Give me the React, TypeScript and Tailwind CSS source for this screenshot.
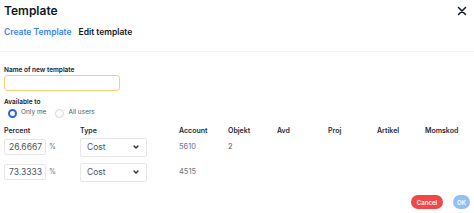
import React from "react";

const Chevron = () => (
  <svg width="6" height="4" viewBox="0 0 6 4" className="text-gray-800">
    <path d="M1 1l2 2L5 1" fill="none" stroke="currentColor" strokeWidth="1.3" strokeLinecap="round" strokeLinejoin="round" />
  </svg>
);

const Row = ({ pct, account, objekt }: { pct: string; account: string; objekt?: string }) => (
  <div className="grid grid-cols-[76px_99px_49px_49px_51px_49px_48px_1fr] items-center h-[20px]">
    <div className="flex items-center">
      <div className="w-[42px] h-[16px] border border-gray-200 rounded-[2px] flex items-center justify-end pr-[3px] text-[8.5px] text-gray-600">
        {pct}
      </div>
      <span className="ml-[3px] text-[7px] text-gray-500">%</span>
    </div>
    <div>
      <div className="w-[67px] h-[19px] border border-gray-200 rounded-[2px] flex items-center justify-between pl-[6px] pr-[7px] text-[8.5px] text-gray-600">
        <span>Cost</span>
        <Chevron />
      </div>
    </div>
    <div className="text-[7.5px] text-gray-500">{account}</div>
    <div className="text-[7.5px] text-gray-600">{objekt ?? ""}</div>
    <div />
    <div />
    <div />
    <div />
  </div>
);

export default function App() {
  return (
    <div
      className="w-[474px] h-[213px] bg-white flex flex-col overflow-hidden"
      style={{ fontFamily: "Inter, 'Noto Sans', sans-serif" }}
    >
      <div className="flex items-start justify-between pl-[4px] pr-[7px] pt-[2px] h-[22px]">
        <div className="text-[12px] font-semibold text-gray-900 leading-[18px]">Template</div>
        <svg width="10" height="10" viewBox="0 0 10 10" className="mt-[4px] text-gray-900">
          <path d="M1.5 1.5l7 7M8.5 1.5l-7 7" stroke="currentColor" strokeWidth="1.5" strokeLinecap="round" />
        </svg>
      </div>
      <div className="flex items-center gap-[7px] pl-[4px] h-[20px] text-[8.5px] font-semibold">
        <span className="text-[#3b82f6]">Create Template</span>
        <span className="text-gray-900">Edit template</span>
      </div>
      <div className="mt-[9px] border-t border-gray-100" />
      <div className="pl-[4px] pt-[14px] flex flex-col">
        <div className="text-[6.5px] font-semibold text-gray-900 leading-[8px]">Name of new template</div>
        <div className="mt-[1px] w-[116px] h-[16px] border border-[#f3cf7a] rounded-[3px]" />
        <div className="mt-[7px] text-[6.5px] font-semibold text-gray-900 leading-[8px]">Available to</div>
        <div className="mt-[1px] flex items-center h-[12px] pl-[4px] text-[6.5px] text-gray-600">
          <span className="w-[9px] h-[9px] rounded-full border-[2.5px] border-[#2563eb] bg-white" />
          <span className="ml-[4px]">Only me</span>
          <span className="ml-[9px] w-[9px] h-[9px] rounded-full border border-gray-300 bg-white" />
          <span className="ml-[4px]">All users</span>
        </div>
        <div className="mt-[7px] grid grid-cols-[76px_99px_49px_49px_51px_49px_48px_1fr] items-center h-[10px] text-[7px] font-semibold text-gray-800">
          <div>Percent</div>
          <div>Type</div>
          <div>Account</div>
          <div>Objekt</div>
          <div>Avd</div>
          <div>Proj</div>
          <div>Artikel</div>
          <div>Momskod</div>
        </div>
        <div className="mt-[1px] flex flex-col gap-[5px]">
          <Row pct="26.6667" account="5610" objekt="2" />
          <Row pct="73.3333" account="4515" />
        </div>
      </div>
      <div className="mt-auto mb-[4px] pr-[4px] flex justify-end gap-[10px]">
        <button className="h-[14px] px-[6px] rounded-full bg-[#f04848] text-white text-[6px] font-semibold">Cancel</button>
        <button className="h-[14px] w-[17px] rounded-full bg-[#93bff7] text-white text-[6px] font-semibold">OK</button>
      </div>
    </div>
  );
}
